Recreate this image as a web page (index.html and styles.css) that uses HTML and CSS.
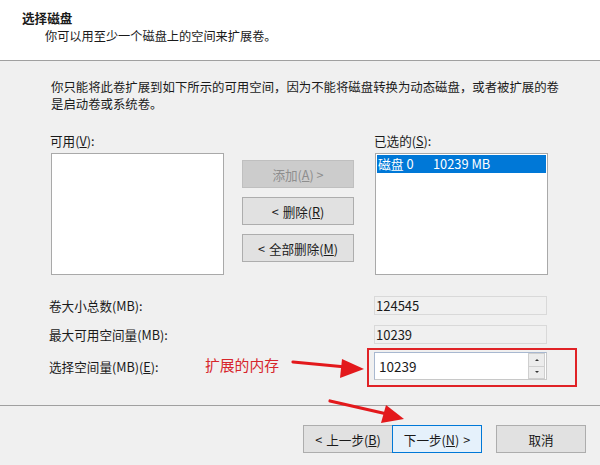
FILE: index.html
```html
<!DOCTYPE html>
<html lang="zh-CN">
<head>
<meta charset="utf-8">
<link rel="stylesheet" href="styles.css">
</head>
<body>
<div class="page">
  <div class="header">
    <div class="title">选择磁盘</div>
    <div class="subtitle">你可以用至少一个磁盘上的空间来扩展卷。</div>
  </div>
  <div class="content">
    <p class="note">你只能将此卷扩展到如下所示的可用空间，因为不能将磁盘转换为动态磁盘，或者被扩展的卷是启动卷或系统卷。</p>
    <div class="lists">
      <div class="listcol">
        <div class="label">可用(<u>V</u>):</div>
        <div class="listbox"></div>
      </div>
      <div class="midcol">
        <div class="btn disabled">添加(<u>A</u>) &gt;</div>
        <div class="btn"><span class="lt">&lt;</span>删除(<u>R</u>)</div>
        <div class="btn"><span class="lt">&lt;</span>全部删除(<u>M</u>)</div>
      </div>
      <div class="listcol">
        <div class="label">已选的(<u>S</u>):</div>
        <div class="listbox">
          <div class="row selected"><span class="disk">磁盘 0</span><span>10239 MB</span></div>
        </div>
      </div>
    </div>
    <div class="fields">
      <div class="frow">
        <div class="flabel">卷大小总数(MB):</div>
        <div class="field ro">124545</div>
      </div>
      <div class="frow">
        <div class="flabel">最大可用空间量(MB):</div>
        <div class="field ro">10239</div>
      </div>
      <div class="frow spinrow">
        <div class="flabel">选择空间量(MB)(<u>E</u>):</div>
        <div class="field spin">
          <span class="val">10239</span>
          <div class="spinbtns">
            <div class="sb up"></div>
            <div class="sb down"></div>
          </div>
        </div>
      </div>
    </div>
  </div>
  <div class="footer">
    <div class="fbtn"><span class="lt">&lt;</span>上一步(<u>B</u>)</div>
    <div class="fbtn focus">下一步(<u>N</u>)<span class="gt">&gt;</span></div>
    <div class="fbtn cancel">取消</div>
  </div>

  <div class="anno-text">扩展的内存</div>
  <div class="anno-box"></div>
  <svg class="anno-arrows" width="600" height="465" viewBox="0 0 600 465">
    <line x1="293" y1="362" x2="346" y2="367" stroke="#e3191c" stroke-width="3.2" stroke-linecap="round"/>
    <polygon points="364,369 342,359 340,378" fill="#e3191c"/>
    <line x1="330" y1="401" x2="387" y2="414" stroke="#e3191c" stroke-width="3.2" stroke-linecap="round"/>
    <polygon points="404,419 386,405 381,423" fill="#e3191c"/>
  </svg>
</div>
</body>
</html>
```
FILE: styles.css
```css
html, body {
  margin: 0;
  padding: 0;
}
body {
  background: #f0f0f0;
  font-family: "Noto Sans CJK SC", "Noto Sans", "Liberation Sans", sans-serif;
  color: #1a1a1a;
  font-size: 12.6px;
}
u { text-decoration: underline; text-underline-offset: 1px; }
.lt { margin-right: 4px; }
.gt { margin-left: 4px; }
.page {
  position: relative;
  width: 600px;
  height: 465px;
  overflow: hidden;
}
.header {
  box-sizing: border-box;
  height: 61px;
  background: #ffffff;
  border-bottom: 1px solid #a0a0a0;
  padding-top: 9px;
  line-height: 18px;
}
.title {
  padding-left: 22px;
  font-weight: bold;
  font-size: 12.6px;
}
.subtitle {
  padding-left: 45px;
  font-size: 12.2px;
}
.content {
  padding-left: 51px;
}
.note {
  margin: 18px 0 0 0;
  width: 520px;
  line-height: 17px;
  font-size: 12.4px;
}
.lists {
  display: flex;
  margin-top: 19px;
}
.listcol {
  width: 173px;
}
.label {
  line-height: 17px;
  height: 17px;
  margin-bottom: 4px;
  margin-left: -1px;
}
.listbox {
  box-sizing: border-box;
  height: 122px;
  background: #ffffff;
  border: 1px solid #a9a9a9;
  padding: 1px;
}
.row {
  height: 18px;
  line-height: 18px;
  font-size: 12.8px;
  padding-left: 1px;
  display: flex;
}
.row.selected {
  background: #0078d7;
  color: #ffffff;
}
.row .disk {
  width: 55px;
}
.midcol {
  width: 112px;
  margin: 0 21px 0 18px;
  padding-top: 28px;
  display: flex;
  flex-direction: column;
  gap: 9px;
}
.btn {
  box-sizing: border-box;
  height: 28px;
  background: #e1e1e1;
  border: 1px solid #adadad;
  display: flex;
  align-items: center;
  justify-content: center;
  font-size: 12.6px;
}
.btn.disabled {
  background: #cccccc;
  border-color: #bfbfbf;
  color: #8e8e8e;
}
.fields {
  margin-top: 21px;
  display: flex;
  flex-direction: column;
  gap: 10px;
}
.frow {
  display: flex;
  align-items: center;
  height: 19px;
}
.frow.spinrow {
  height: 28px;
  margin-top: -2px;
}
.flabel {
  width: 323px;
  margin-left: -2px;
  padding-right: 2px;
  font-size: 12.6px;
}
.field {
  box-sizing: border-box;
  width: 173px;
  height: 19px;
  font-size: 13px;
  line-height: 17px;
}
.field.ro {
  background: #f0f0f0;
  border: 1px solid #d9d9d9;
  padding-left: 1px;
}
.field.spin {
  height: 28px;
  background: #ffffff;
  border: 1px solid #a8b8d0;
  border-color: #a8b8d0 #c8c8c8 #c8c8c8 #a8b8d0;
  display: flex;
  align-items: center;
  padding-left: 4px;
  font-size: 13.5px;
}
.field.spin .val {
  flex: 1;
}
.spinbtns {
  width: 17px;
  height: 26px;
  display: flex;
  flex-direction: column;
  margin-right: 1px;
}
.sb {
  flex: 1;
  box-sizing: border-box;
  background: #ececec;
  border: 1px solid #cfcfcf;
  position: relative;
}
.sb.down { border-top: none; }
.sb::after {
  content: "";
  position: absolute;
  left: 6px;
  top: 5px;
  width: 0;
  height: 0;
  border-left: 2px solid transparent;
  border-right: 2px solid transparent;
}
.sb.up::after { border-bottom: 2px solid #333; }
.sb.down::after { border-top: 2px solid #333; top: 4px; }
.footer {
  margin-top: 25px;
  border-top: 1px solid #a0a0a0;
  padding-top: 19px;
  display: flex;
  padding-left: 303px;
}
.fbtn {
  box-sizing: border-box;
  width: 90px;
  height: 28px;
  background: #e1e1e1;
  border: 1px solid #adadad;
  display: flex;
  align-items: center;
  justify-content: center;
  font-size: 12.6px;
}
.fbtn.focus {
  background: #e5f1fb;
  border-color: #0078d7;
  margin-left: -1px;
}
.fbtn.cancel {
  margin-left: 14px;
}
.anno-text {
  position: absolute;
  left: 205px;
  top: 355px;
  color: #d7262b;
  font-size: 14.8px;
  line-height: 20px;
}
.anno-box {
  position: absolute;
  left: 367px;
  top: 348px;
  width: 210px;
  height: 39px;
  box-sizing: border-box;
  border: 2px solid #e02226;
}
.anno-arrows {
  position: absolute;
  left: 0;
  top: 0;
}
```
